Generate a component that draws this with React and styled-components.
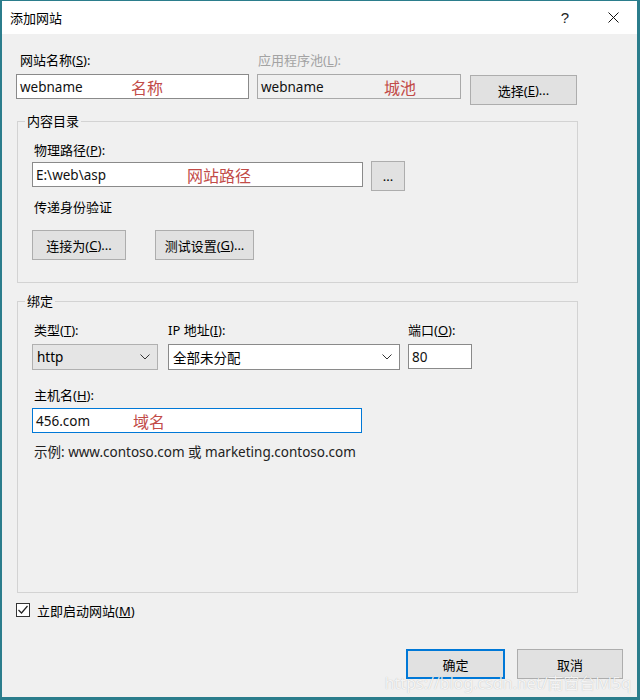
import React from 'react';
import styled, { createGlobalStyle } from 'styled-components';

const GlobalStyle = createGlobalStyle`
  html, body {
    margin: 0;
    padding: 0;
    background: #f0f0f0;
  }
  body {
    font-family: "Noto Sans", "Noto Sans CJK SC", sans-serif;
    font-size: 13px;
    color: #000;
  }
  * { box-sizing: border-box; }
`;

const Window = styled.div`
  position: relative;
  width: 640px;
  height: 700px;
  display: flex;
  flex-direction: column;
  border-style: solid;
  border-color: #2b7d8c;
  border-width: 1px 3px 3px 2px;
  background: #f0f0f0;
  overflow: hidden;
`;

const TitleBar = styled.div`
  height: 33px;
  background: #fff;
  display: flex;
  align-items: center;
  padding-left: 8px;
`;

const Title = styled.div`
  flex: 1;
  font-size: 13px;
  line-height: 16px;
`;

const TitleButton = styled.div`
  width: 48px;
  height: 33px;
  display: flex;
  align-items: center;
  justify-content: center;
  color: #222;
  font-size: 15px;
  font-family: "Liberation Sans", sans-serif;
`;

const Body = styled.div`
  display: flex;
  flex-direction: column;
  padding: 18px 60px 0 14px;
`;

const Row = styled.div`
  display: flex;
  align-items: flex-start;
  margin-top: ${p => p.$mt || 0}px;
`;

const Field = styled.div`
  display: flex;
  flex-direction: column;
  width: ${p => p.$w}px;
  margin-right: ${p => p.$gap || 0}px;
`;

const Label = styled.div`
  height: 16px;
  line-height: 16px;
  white-space: nowrap;
  padding-left: ${p => p.$indent || 0}px;
  margin-top: ${p => p.$mt || 0}px;
  margin-bottom: ${p => (p.$mb === undefined ? 6 : p.$mb)}px;
  color: ${p => (p.$disabled ? '#a3a3a3' : '#000')};
`;

const TextBox = styled.div`
  position: relative;
  width: ${p => (p.$w ? `${p.$w}px` : '100%')};
  height: 25px;
  display: flex;
  align-items: center;
  padding-left: 3px;
  font-size: 13.5px;
  white-space: nowrap;
  color: #111;
  background: ${p => (p.$disabled ? '#f0f0f0' : '#fff')};
  border: 1px solid ${p => (p.$focus ? '#0078d7' : p.$disabled ? '#a9a9a9' : '#8a8a8a')};
`;

const Note = styled.span`
  position: absolute;
  left: ${p => p.$x}px;
  top: 50%;
  transform: translateY(-52%);
  font-family: "Noto Sans CJK SC", sans-serif;
  font-size: 16px;
  color: #c24b48;
`;

const Button = styled.div`
  width: ${p => p.$w}px;
  height: 30px;
  flex: none;
  display: flex;
  align-items: center;
  justify-content: center;
  background: #e1e1e1;
  border: ${p => (p.$default ? '2px solid #0078d7' : '1px solid #adadad')};
  margin-top: ${p => p.$mt || 0}px;
  margin-left: ${p => p.$ml || 0}px;
  white-space: nowrap;
`;

const Group = styled.fieldset`
  width: 561px;
  height: ${p => p.$h}px;
  min-width: 0;
  margin: ${p => p.$mt}px 0 0 1px;
  padding: 12px 14px 0 14px;
  border: 1px solid #d3d3d3;
`;

const Legend = styled.legend`
  padding: 0 2px;
  margin-left: -7px;
  line-height: 17px;
`;

const Select = styled.div`
  width: ${p => p.$w}px;
  height: 26px;
  display: flex;
  align-items: center;
  justify-content: space-between;
  padding: 0 7px 0 4px;
  font-size: 13.5px;
  background: ${p => (p.$flat ? '#e5e5e5' : '#fff')};
  border: 1px solid ${p => (p.$flat ? '#b0b0b0' : '#8a8a8a')};
`;

const Hint = styled.div`
  margin-top: 11px;
  padding-left: 2px;
  line-height: 16px;
  font-size: 13.5px;
  color: #222;
  white-space: nowrap;
`;

const CheckRow = styled.div`
  display: flex;
  align-items: center;
  margin-top: 9px;
  height: 16px;
  gap: 7px;
`;

const Footer = styled.div`
  display: flex;
  justify-content: flex-end;
  margin-top: auto;
  padding: 0 14px 18px 0;
`;

const Watermark = styled.div`
  position: absolute;
  right: 6px;
  bottom: 6px;
  font-size: 16px;
  line-height: 16px;
  color: rgba(255, 255, 255, 0.85);
  text-shadow: 0 0 1px rgba(0, 0, 0, 0.25);
  white-space: nowrap;
`;

const Chevron = () => (
  <svg width="10" height="6" viewBox="0 0 10 6">
    <polyline points="0.5,0.5 5,5 9.5,0.5" fill="none" stroke="#333" strokeWidth="1" />
  </svg>
);

const CloseIcon = () => (
  <svg width="11" height="11" viewBox="0 0 11 11">
    <line x1="0.5" y1="0.5" x2="10.5" y2="10.5" stroke="#111" strokeWidth="1" />
    <line x1="10.5" y1="0.5" x2="0.5" y2="10.5" stroke="#111" strokeWidth="1" />
  </svg>
);

const CheckBox = () => (
  <svg width="14" height="14" viewBox="0 0 14 14">
    <rect x="0.5" y="0.5" width="13" height="13" fill="#fff" stroke="#333" />
    <polyline points="2.5,7 5.5,10 11.5,3" fill="none" stroke="#222" strokeWidth="1.2" />
  </svg>
);

export default function App() {
  return (
    <>
      <GlobalStyle />
      <Window>
        <TitleBar>
          <Title>添加网站</Title>
          <TitleButton>?</TitleButton>
          <TitleButton><CloseIcon /></TitleButton>
        </TitleBar>

        <Body>
          <Row>
            <Field $w={233} $gap={8}>
              <Label $indent={4}>网站名称(<u>S</u>):</Label>
              <TextBox>
                webname
                <Note $x={114}>名称</Note>
              </TextBox>
            </Field>
            <Field $w={204} $gap={9}>
              <Label $disabled $indent={1}>应用程序池(<u>L</u>):</Label>
              <TextBox $disabled>
                webname
                <Note $x={126}>城池</Note>
              </TextBox>
            </Field>
            <Button $w={107} $mt={23}>选择(<u>E</u>)...</Button>
          </Row>

          <Group $mt={8} $h={170}>
            <Legend>内容目录</Legend>
            <Label $mb={4} $indent={2}>物理路径(<u>P</u>):</Label>
            <Row>
              <TextBox $w={331}>
                E:\web\asp
                <Note $x={154}>网站路径</Note>
              </TextBox>
              <Button $w={34} $mt={-1} $ml={8}>...</Button>
            </Row>
            <Label $mt={8} $mb={15} $indent={2}>传递身份验证</Label>
            <Row>
              <Button $w={94}>连接为(<u>C</u>)...</Button>
              <Button $w={99} $ml={29}>测试设置(<u>G</u>)...</Button>
            </Row>
          </Group>

          <Group $mt={10} $h={300}>
            <Legend>绑定</Legend>
            <Row>
              <Field $w={126} $gap={10}>
                <Label $indent={2}>类型(<u>T</u>):</Label>
                <Select $w={126} $flat>
                  http
                  <Chevron />
                </Select>
              </Field>
              <Field $w={232} $gap={8}>
                <Label>IP 地址(<u>I</u>):</Label>
                <Select $w={232}>
                  全部未分配
                  <Chevron />
                </Select>
              </Field>
              <Field $w={64}>
                <Label>端口(<u>O</u>):</Label>
                <TextBox>80</TextBox>
              </Field>
            </Row>
            <Label $mt={17} $mb={5} $indent={2}>主机名(<u>H</u>):</Label>
            <TextBox $w={330} $focus>
              456.com
              <Note $x={100}>域名</Note>
            </TextBox>
            <Hint>示例: www.contoso.com 或 marketing.contoso.com</Hint>
          </Group>

          <CheckRow>
            <CheckBox />
            <span>立即启动网站(<u>M</u>)</span>
          </CheckRow>
        </Body>

        <Footer>
          <Button $w={99} $default>确定</Button>
          <Button $w={106} $ml={12}>取消</Button>
        </Footer>

        <Watermark>https://blog.csdn.net/南窗台lvl5q</Watermark>
      </Window>
    </>
  );
}
